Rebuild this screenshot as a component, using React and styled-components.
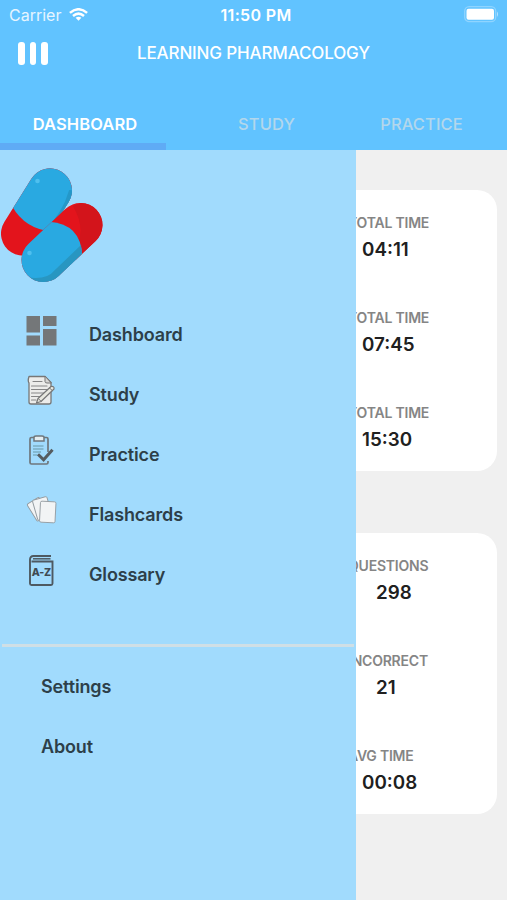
import React, { useState } from 'react';
import styled, { createGlobalStyle } from 'styled-components';

const GlobalStyle = createGlobalStyle`
  * {
    box-sizing: border-box;
  }
  body {
    margin: 0;
    background: #f0f0f0;
    font-family: Inter, "Liberation Sans", sans-serif;
  }
`;

const Screen = styled.div`
  position: relative;
  width: 507px;
  height: 900px;
  overflow: hidden;
  display: flex;
  flex-direction: column;
  background: #f0f0f0;
`;

const Header = styled.header`
  height: 150px;
  flex: none;
  display: flex;
  flex-direction: column;
  background: #61c3ff;
  color: #fff;
`;

const StatusBar = styled.div`
  height: 29px;
  padding: 0 8px 0 9px;
  display: grid;
  grid-template-columns: 1fr auto 1fr;
  align-items: center;
`;

const Carrier = styled.div`
  display: flex;
  align-items: center;
  gap: 8px;
  font-size: 16px;
  color: #e6f5ff;
`;

const Clock = styled.div`
  font-size: 16px;
  font-weight: 600;
  letter-spacing: 0.35px;
  padding-left: 4px;
`;

const Battery = styled.svg`
  justify-self: end;
`;

const TitleBar = styled.div`
  height: 49px;
  padding: 0 18px;
  display: grid;
  grid-template-columns: 30px 1fr 30px;
  align-items: center;
`;

const MenuButton = styled.button`
  display: flex;
  gap: 5px;
  padding: 0;
  border: none;
  background: none;
  cursor: pointer;
`;

const MenuBar = styled.span`
  width: 6.5px;
  height: 23px;
  border-radius: 3px;
  background: #fff;
`;

const Title = styled.h1`
  margin: 0;
  padding-bottom: 1px;
  font-size: 17px;
  line-height: 24px;
  font-weight: 500;
  text-align: center;
  white-space: nowrap;
  letter-spacing: -0.14px;
`;

const Tabs = styled.nav`
  flex: 1;
  display: grid;
  grid-template-columns: 166px 195px 121px;
`;

const Tab = styled.button`
  padding: 27px 0 0 ${props => props.$shift}px;
  border: none;
  border-bottom: 7px solid ${props => props.$active ? '#5fabf5' : 'transparent'};
  border-radius: 0 2px 0 0;
  background: none;
  font-family: inherit;
  font-size: 16.5px;
  font-weight: ${props => props.$active ? 600 : 500};
  letter-spacing: 0.1px;
  color: ${props => props.$active ? '#fff' : '#b3d7ec'};
  cursor: pointer;
`;

const Content = styled.main`
  display: flex;
  flex-direction: column;
  gap: 62px;
  padding: 40px 10px 0;
`;

const Card = styled.section`
  height: 281px;
  padding: 23px 0 0 337px;
  display: flex;
  flex-direction: column;
  gap: 45px;
  border-radius: 20px;
  background: #fff;
`;

const Stat = styled.div`
  height: 50px;
  white-space: nowrap;
`;

const StatLabel = styled.div`
  padding-left: 1px;
  font-size: 14px;
  line-height: 20px;
  font-weight: 600;
  letter-spacing: -0.22px;
  color: #858585;
`;

const StatValue = styled.div`
  padding-left: ${props => props.$count ? 29 : 15}px;
  padding-top: 5px;
  font-size: 18.8px;
  line-height: 24px;
  font-weight: 600;
  color: #202020;
`;

const Drawer = styled.aside`
  position: absolute;
  top: 150px;
  left: 0;
  bottom: 0;
  width: 356px;
  padding-top: 17px;
  background: #a1dbfd;
`;

const Logo = styled.svg`
  display: block;
`;

const MenuList = styled.div`
  margin-top: 19px;
  padding-left: 25px;
`;

const MenuItem = styled.a`
  height: 60px;
  display: flex;
  align-items: center;
  gap: 32px;
  font-size: 18px;
  font-weight: 600;
  letter-spacing: -0.15px;
  color: #2d3f49;
  cursor: pointer;
`;

const MenuIcon = styled.svg`
  width: 32px;
  height: 32px;
  flex: none;
  margin-bottom: 6px;
`;

const Divider = styled.hr`
  height: 3px;
  margin: 40px 2px 0;
  border: none;
  background: #cfdfe6;
`;

const FooterList = styled.div`
  padding: 9px 0 0 41px;
`;

const WifiIcon = () => (
  <svg width="19" height="13" viewBox="0 0 19 13" fill="none" stroke="#fff" strokeWidth="2.5">
    <path d="M0.9 4.9 Q9.5 -2.4 18.1 4.9" />
    <path d="M4 8 Q9.5 3.3 15 8" />
    <path d="M9.5 12.8 L6.6 9.8 Q9.5 7.6 12.4 9.8 Z" fill="#fff" stroke="none" />
  </svg>
);

const PillsLogo = () => (
  <Logo width="106" height="118" viewBox="0 0 106 118">
    <defs>
      <clipPath id="pill">
        <rect x="-22" y="-47.5" width="44" height="95" rx="22" />
      </clipPath>
    </defs>
    <g transform="translate(36.5 45) rotate(32)">
      <g clipPath="url(#pill)">
        <rect x="-24" y="-50" width="48" height="100" fill="#e3141c" />
        <path d="M-24 -50 H24 V8 Q0 21 -24 8 Z" fill="#29a9e1" />
        <path d="M24 -40 L16 -36 Q23 -12 16 11.5 L24 8 Z" fill="#2498c9" />
      </g>
    </g>
    <g transform="translate(62 75.5) rotate(46.5)">
      <g clipPath="url(#pill)">
        <rect x="-24" y="-50" width="48" height="100" fill="#e3141c" />
        <path d="M-12 -50 H24 V2 H15 Q12 -26 -19 -33 Z" fill="#d3141b" />
        <path d="M-24 -5 Q0 -27 24 -5 V50 H-24 Z" fill="#29a9e1" />
        <path d="M15 -12 L24 -5 V50 H0 Q17 38 15 24 Z" fill="#2896c1" />
      </g>
    </g>
    <circle cx="37.5" cy="14" r="2.3" fill="#4fc0ef" />
    <circle cx="29.5" cy="86" r="2.3" fill="#4fc0ef" />
  </Logo>
);

const icons = {
  dashboard: (
    <g fill="#747779">
      <rect x="1.5" y="1" width="13.5" height="16.5" />
      <rect x="18" y="1" width="13.5" height="10" />
      <rect x="1.5" y="20.5" width="13.5" height="10" />
      <rect x="18" y="14" width="13.5" height="16.5" />
    </g>
  ),
  study: (
    <g strokeLinejoin="round" strokeLinecap="round">
      <path d="M4 1.5 H20 L26 7.5 V27 Q26 29 24 29 H6 Q4 29 4 27 V8 Q2.5 6 4 1.5 Z" fill="#ececea" stroke="#777" strokeWidth="1.3" />
      <path d="M20 1.5 V6.5 Q20 8 22 8 H26 Z" fill="#d5d5d3" stroke="#777" />
      <path d="M8 6.5 H17 M6.5 11 H22 M6.5 14.5 H22 M6.5 18 H19 M6.5 21.5 H15 M6.5 25 H11" stroke="#858585" strokeWidth="1.1" />
      <path d="M11.5 28 L13 23.5 L26 11.5 Q29.5 11 29 14 L16 26.5 Z" fill="#e8e8df" stroke="#777" strokeWidth="1.2" />
      <path d="M13.5 23.8 L16 26.2 M24.5 13 L27.5 15.7" stroke="#777" />
    </g>
  ),
  practice: (
    <g fill="none" stroke="#6f777c">
      <path d="M9 2.5 H6.5 Q5 2.5 5 4 V27.5 Q5 29 6.5 29 H21.5 Q23 29 23 27.5 V26 M18.5 2.5 H21.5 Q23 2.5 23 4 V17" strokeWidth="1.7" />
      <path d="M9 2.5 Q9 1 11 1 H17 Q19 1 19 2.5 V6 H9 Z" fill="#e5edf0" strokeWidth="1.5" />
      <path d="M8 11 H18.5 M8 14 H18.5 M8 17 H16 M8 20 H12" stroke="#6998a5" strokeWidth="1.2" />
      <path d="M13 19.3 L18.6 24.8 L27.5 14.8" stroke="#555c60" strokeWidth="3" />
    </g>
  ),
  flashcards: (
    <g fill="#f2f4f5" stroke="#929a9f" strokeWidth="0.9">
      <rect x="6" y="4" width="14" height="20" rx="1.5" transform="rotate(-32 13.5 14)" />
      <rect x="10" y="3" width="15" height="21" rx="1.5" transform="rotate(-16 17.5 14)" />
      <rect x="15" y="6.5" width="15.5" height="21" rx="1.5" transform="rotate(3 22.5 17)" />
    </g>
  ),
  glossary: (
    <g fill="none" stroke="#4e5961">
      <path d="M26 1 H8.5 Q5 1 5 4.5 V28.5 Q5 30 6.5 30 H26 Q27.5 30 27.5 28.5 V6.5 H6.5" strokeWidth="1.9" />
      <path d="M8 3.8 H25.5" strokeWidth="1.5" />
      <text x="16.3" y="21.3" textAnchor="middle" fontSize="10.5" fontWeight="800" letterSpacing="-0.2" fill="#3f4a52" stroke="none">A-Z</text>
    </g>
  ),
};

const menu = [
  { key: 'dashboard', label: 'Dashboard' },
  { key: 'study', label: 'Study' },
  { key: 'practice', label: 'Practice' },
  { key: 'flashcards', label: 'Flashcards' },
  { key: 'glossary', label: 'Glossary' },
];

const tabs = [
  { name: 'DASHBOARD', shift: 4 },
  { name: 'STUDY', shift: 6 },
  { name: 'PRACTICE', shift: 0 },
];

const cards = [
  [
    { label: 'TOTAL TIME', value: '04:11' },
    { label: 'TOTAL TIME', value: '07:45' },
    { label: 'TOTAL TIME', value: '15:30' },
  ],
  [
    { label: 'QUESTIONS', value: '298', count: true },
    { label: 'INCORRECT', value: '21', count: true },
    { label: 'AVG TIME', value: '00:08' },
  ],
];

const App = () => {
  const [tab, setTab] = useState('DASHBOARD');
  const [open, setOpen] = useState(true);

  return (
    <Screen>
      <GlobalStyle />
      <Header>
        <StatusBar>
          <Carrier>Carrier <WifiIcon /></Carrier>
          <Clock>11:50 PM</Clock>
          <Battery width="36" height="17" viewBox="0 0 36 17">
            <rect x="1.7" y="0.7" width="31" height="15" rx="4.5" fill="none" stroke="#8fd4ff" strokeWidth="1.3" />
            <rect x="3.5" y="2.7" width="27.5" height="11" rx="2" fill="#fff" />
            <path d="M34 5.5 Q36 8.2 34 11 Z" fill="#b5e2ff" />
          </Battery>
        </StatusBar>
        <TitleBar>
          <MenuButton onClick={() => setOpen(!open)} aria-label="Menu">
            <MenuBar />
            <MenuBar />
            <MenuBar />
          </MenuButton>
          <Title>LEARNING PHARMACOLOGY</Title>
        </TitleBar>
        <Tabs>
          {tabs.map(({ name, shift }) => (
            <Tab key={name} $shift={shift} $active={tab === name} onClick={() => setTab(name)}>{name}</Tab>
          ))}
        </Tabs>
      </Header>
      <Content>
        {cards.map((stats, i) => (
          <Card key={i}>
            {stats.map((stat, j) => (
              <Stat key={j}>
                <StatLabel>{stat.label}</StatLabel>
                <StatValue $count={stat.count}>{stat.value}</StatValue>
              </Stat>
            ))}
          </Card>
        ))}
      </Content>
      {open && (
        <Drawer>
          <PillsLogo />
          <MenuList>
            {menu.map(item => (
              <MenuItem key={item.key}>
                <MenuIcon viewBox="0 0 32 32">{icons[item.key]}</MenuIcon>
                {item.label}
              </MenuItem>
            ))}
          </MenuList>
          <Divider />
          <FooterList>
            <MenuItem>Settings</MenuItem>
            <MenuItem>About</MenuItem>
          </FooterList>
        </Drawer>
      )}
    </Screen>
  );
};

export default App;
